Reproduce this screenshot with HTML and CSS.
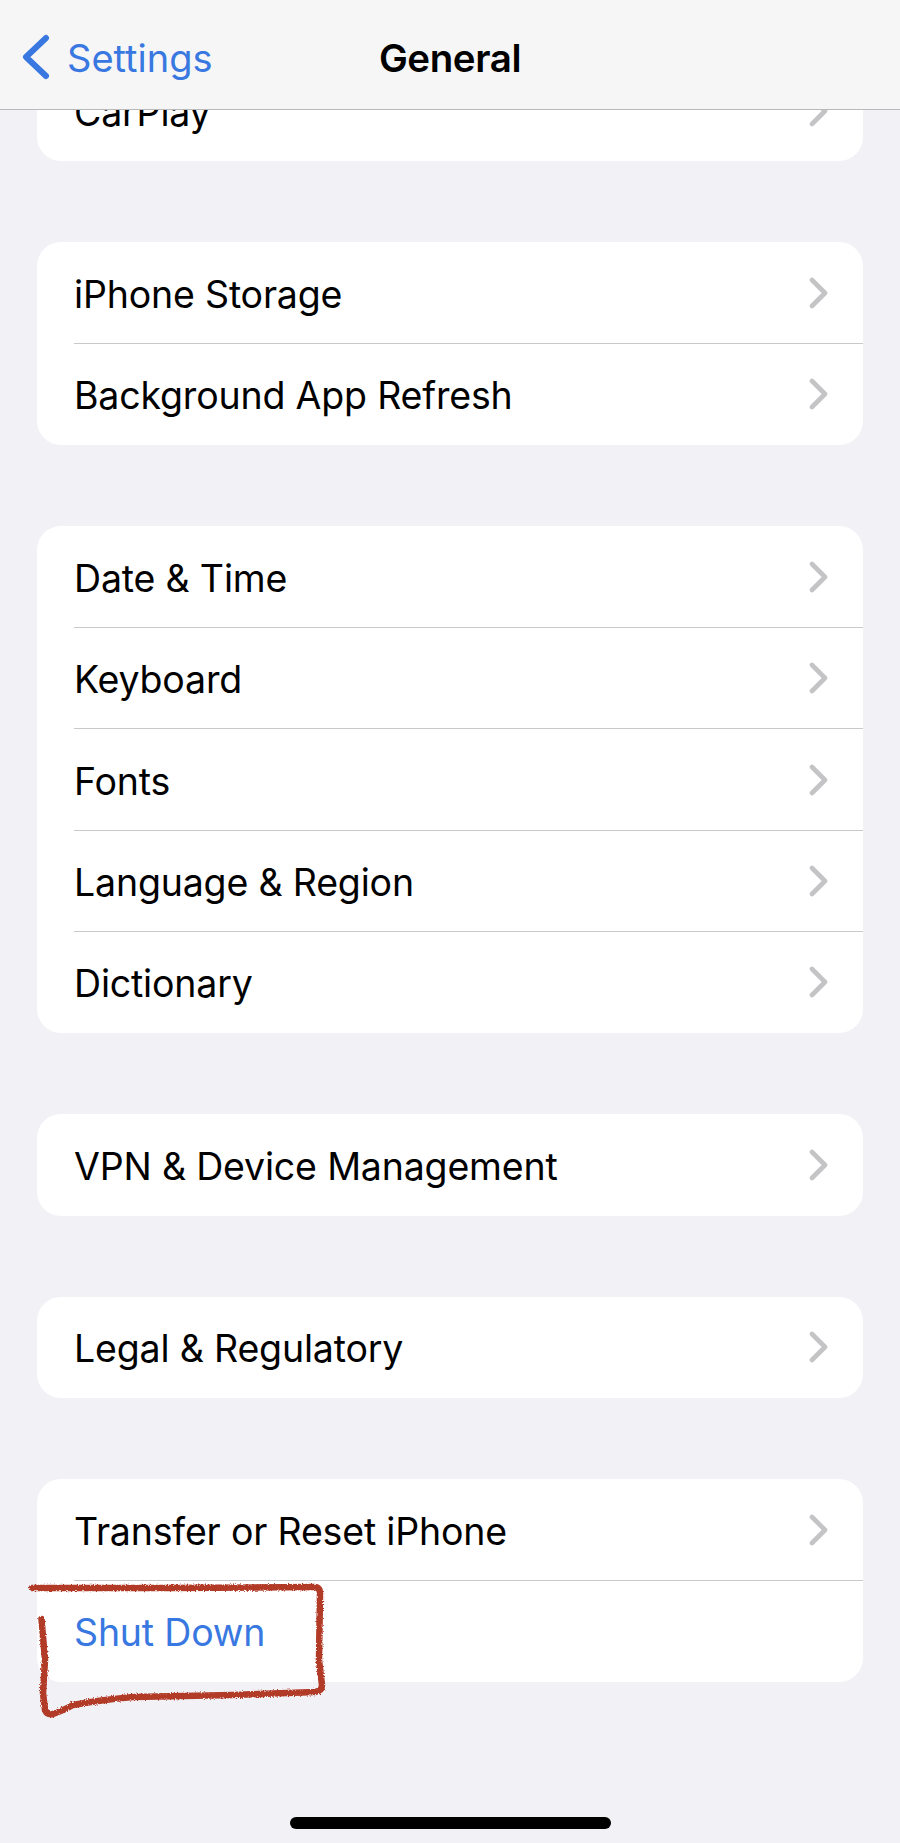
FILE: index.html
```html
<!DOCTYPE html>
<html lang="en">
<head>
<meta charset="utf-8">
<title>General</title>
<link rel="stylesheet" href="styles.css">
</head>
<body>
<div class="screen">
  <header class="nav">
    <a class="back">
      <svg class="back-icon" viewBox="0 0 30 48"><path d="M26 5 L6 24 L26 43"/></svg>
      <span class="back-label">Settings</span>
    </a>
    <h1 class="title">General</h1>
  </header>
  <main class="list">
    <section class="card">
      <div class="row"><span class="label">CarPlay</span><svg class="chev" viewBox="0 0 20 32"><path d="M3 3 L16 16 L3 29"/></svg></div>
    </section>
    <section class="card">
      <div class="row"><span class="label">iPhone Storage</span><svg class="chev" viewBox="0 0 20 32"><path d="M3 3 L16 16 L3 29"/></svg></div>
      <div class="row"><span class="label">Background App Refresh</span><svg class="chev" viewBox="0 0 20 32"><path d="M3 3 L16 16 L3 29"/></svg></div>
    </section>
    <section class="card">
      <div class="row"><span class="label">Date &amp; Time</span><svg class="chev" viewBox="0 0 20 32"><path d="M3 3 L16 16 L3 29"/></svg></div>
      <div class="row"><span class="label">Keyboard</span><svg class="chev" viewBox="0 0 20 32"><path d="M3 3 L16 16 L3 29"/></svg></div>
      <div class="row"><span class="label">Fonts</span><svg class="chev" viewBox="0 0 20 32"><path d="M3 3 L16 16 L3 29"/></svg></div>
      <div class="row"><span class="label">Language &amp; Region</span><svg class="chev" viewBox="0 0 20 32"><path d="M3 3 L16 16 L3 29"/></svg></div>
      <div class="row"><span class="label">Dictionary</span><svg class="chev" viewBox="0 0 20 32"><path d="M3 3 L16 16 L3 29"/></svg></div>
    </section>
    <section class="card">
      <div class="row"><span class="label">VPN &amp; Device Management</span><svg class="chev" viewBox="0 0 20 32"><path d="M3 3 L16 16 L3 29"/></svg></div>
    </section>
    <section class="card">
      <div class="row"><span class="label">Legal &amp; Regulatory</span><svg class="chev" viewBox="0 0 20 32"><path d="M3 3 L16 16 L3 29"/></svg></div>
    </section>
    <section class="card">
      <div class="row"><span class="label">Transfer or Reset iPhone</span><svg class="chev" viewBox="0 0 20 32"><path d="M3 3 L16 16 L3 29"/></svg></div>
      <div class="row"><span class="label action">Shut Down</span></div>
    </section>
  </main>
  <svg class="scribble" viewBox="0 0 900 1843">
    <defs>
      <filter id="rough" x="-5%" y="-5%" width="110%" height="110%">
        <feTurbulence type="fractalNoise" baseFrequency="0.7" numOctaves="2" seed="4"/>
        <feDisplacementMap in="SourceGraphic" scale="3.5"/>
      </filter>
    </defs>
    <path filter="url(#rough)" d="M41.5 1619 L45 1660 L43 1693 L45 1710 Q47 1715 53 1714 Q62 1711 73 1705 Q100 1700 133 1697 L233 1695 L315 1692 Q322 1691 322 1685 L319 1660 L320 1593 Q320 1587 314 1587 L170 1588 L32 1588"/>
  </svg>
  <div class="home-bar"></div>
</div>
</body>
</html>
```
FILE: styles.css
```css
* { box-sizing: border-box; }
html, body { margin: 0; padding: 0; }
body {
  width: 900px;
  height: 1843px;
  overflow: hidden;
  background: #f1f1f6;
  font-family: Inter, "Liberation Sans", sans-serif;
  color: #000;
}
.screen {
  position: relative;
  width: 900px;
  height: 1843px;
  overflow: hidden;
}
.nav {
  position: absolute;
  top: 0;
  left: 0;
  right: 0;
  height: 110px;
  display: flex;
  align-items: center;
  justify-content: center;
  background: #f6f6f7;
  border-bottom: 1px solid #b9b9bb;
  z-index: 2;
}
.title {
  margin: 0;
  font-size: 38.5px;
  font-weight: 600;
  letter-spacing: -0.4px;
  position: relative;
  top: 3px;
}
.back {
  position: absolute;
  left: 20px;
  top: 33px;
  display: flex;
  align-items: center;
  gap: 17px;
  color: #3878e0;
  font-size: 38px;
}
.back-label {
  position: relative;
  top: 1px;
}
.back-icon {
  width: 30px;
  height: 48px;
  fill: none;
  stroke: #3878e0;
  stroke-width: 6;
  stroke-linecap: round;
  stroke-linejoin: round;
}
.list {
  display: flex;
  flex-direction: column;
  gap: 81px;
  padding: 60px 37px 0;
}
.card {
  background: #fff;
  border-radius: 24px;
  overflow: hidden;
}
.row {
  position: relative;
  height: 101.4px;
  display: flex;
  align-items: center;
  justify-content: space-between;
  padding: 0 34px 0 37px;
}
.row + .row::before {
  content: "";
  position: absolute;
  top: -0.5px;
  left: 37px;
  right: 0;
  height: 1px;
  background: #c9c9cc;
}
.label {
  font-size: 37.5px;
  letter-spacing: -0.18px;
  position: relative;
  top: 1.5px;
}
.action { color: #3878e0; }
.chev {
  width: 20px;
  height: 32px;
  fill: none;
  stroke: #c4c4c6;
  stroke-width: 4.6;
  stroke-linecap: round;
  stroke-linejoin: round;
}
.scribble {
  position: absolute;
  inset: 0;
  width: 900px;
  height: 1843px;
  z-index: 3;
  pointer-events: none;
}
.scribble path {
  fill: none;
  stroke: #b13a27;
  stroke-width: 6.5;
  stroke-linecap: round;
  stroke-linejoin: round;
}
.home-bar {
  position: absolute;
  left: 290px;
  top: 1817px;
  width: 321px;
  height: 11.5px;
  border-radius: 6px;
  background: #000;
}
```
